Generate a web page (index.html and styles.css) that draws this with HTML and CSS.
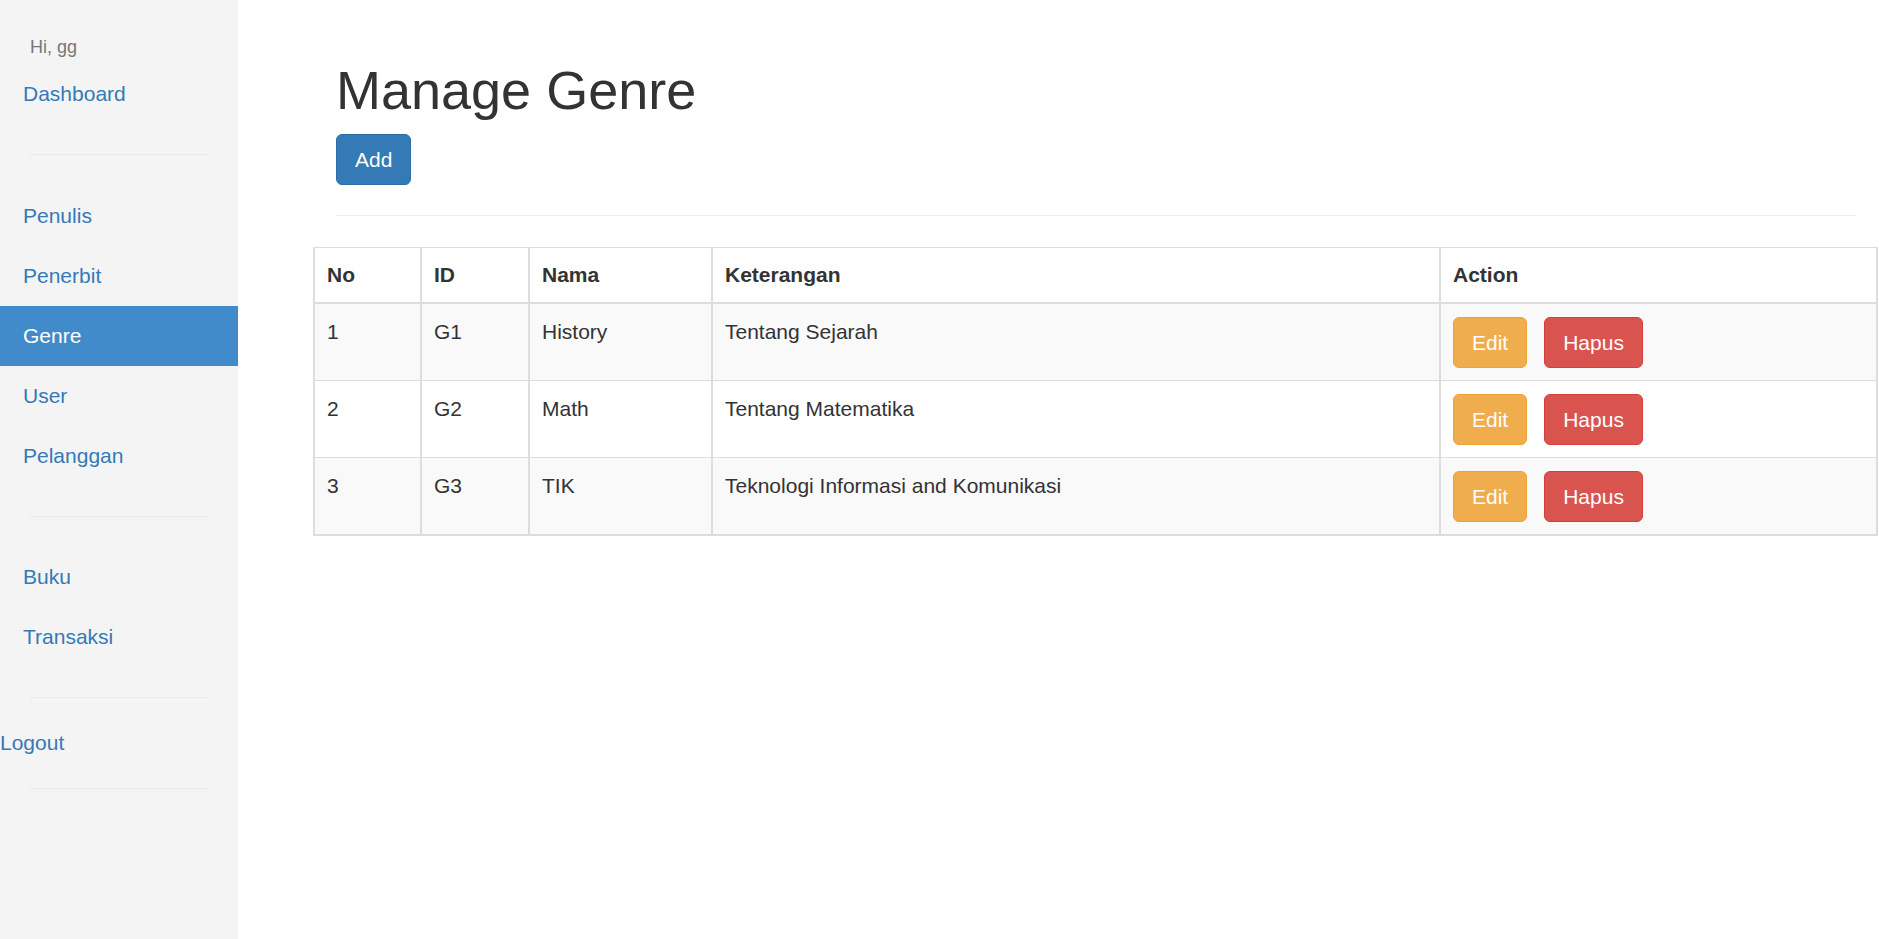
FILE: index.html
```html
<!DOCTYPE html>
<html lang="id">
<head>
<meta charset="utf-8">
<title>Manage Genre</title>
<link rel="stylesheet" href="styles.css">
</head>
<body>
<div class="layout">
  <aside class="sidebar">
    <div class="greeting">Hi, gg</div>
    <ul class="nav nav-first">
      <li><a class="nav-link" href="#">Dashboard</a></li>
    </ul>
    <hr class="sep sep-first">
    <ul class="nav">
      <li><a class="nav-link" href="#">Penulis</a></li>
      <li><a class="nav-link" href="#">Penerbit</a></li>
      <li><a class="nav-link active" href="#">Genre</a></li>
      <li><a class="nav-link" href="#">User</a></li>
      <li><a class="nav-link" href="#">Pelanggan</a></li>
    </ul>
    <hr class="sep">
    <ul class="nav">
      <li><a class="nav-link" href="#">Buku</a></li>
      <li><a class="nav-link" href="#">Transaksi</a></li>
    </ul>
    <hr class="sep">
    <a class="logout" href="#">Logout</a>
    <hr class="sep">
  </aside>
  <main class="main">
    <div class="page-head">
      <h1 class="title">Manage Genre</h1>
      <div class="toolbar"><a class="btn btn-primary" href="#">Add</a></div>
      <hr class="divider">
    </div>
    <table class="table">
      <colgroup>
        <col class="col-no">
        <col class="col-id">
        <col class="col-nama">
        <col class="col-ket">
        <col class="col-action">
      </colgroup>
      <thead>
        <tr><th>No</th><th>ID</th><th>Nama</th><th>Keterangan</th><th>Action</th></tr>
      </thead>
      <tbody>
        <tr class="odd">
          <td>1</td><td>G1</td><td>History</td><td>Tentang Sejarah</td>
          <td><div class="actions"><a class="btn btn-warning" href="#">Edit</a><a class="btn btn-danger" href="#">Hapus</a></div></td>
        </tr>
        <tr>
          <td>2</td><td>G2</td><td>Math</td><td>Tentang Matematika</td>
          <td><div class="actions"><a class="btn btn-warning" href="#">Edit</a><a class="btn btn-danger" href="#">Hapus</a></div></td>
        </tr>
        <tr class="odd">
          <td>3</td><td>G3</td><td>TIK</td><td>Teknologi Informasi and Komunikasi</td>
          <td><div class="actions"><a class="btn btn-warning" href="#">Edit</a><a class="btn btn-danger" href="#">Hapus</a></div></td>
        </tr>
      </tbody>
    </table>
  </main>
</div>
</body>
</html>
```

FILE: styles.css
```css
* { box-sizing: border-box; }

html, body {
  margin: 0;
  padding: 0;
  background: #fff;
}

body {
  font-family: "Liberation Sans", Arial, Helvetica, sans-serif;
  font-size: 21px;
  line-height: 30px;
  color: #333;
}

.layout {
  display: flex;
  min-height: 939px;
}

/* Sidebar */
.sidebar {
  width: 238px;
  flex: 0 0 238px;
  background: #f4f4f4;
}

.greeting {
  margin-top: 34px;
  padding-left: 30px;
  font-size: 18px;
  line-height: 26px;
  color: #777;
}

.nav {
  list-style: none;
  margin: 0;
  padding: 0;
}

.nav-first {
  margin-top: 4px;
}

.nav-link {
  display: block;
  padding: 15px 23px;
  line-height: 30px;
  color: #337ab7;
  text-decoration: none;
}

.nav-link.active {
  background: #428bca;
  color: #fff;
}

.sep {
  height: 0;
  border: 0;
  border-top: 1px solid #e9e9e9;
  margin: 30px 30px 30px;
}

.sep-first {
  margin-bottom: 31px;
}

.logout {
  display: block;
  line-height: 30px;
  color: #337ab7;
  text-decoration: none;
}

/* Main */
.main {
  flex: 1;
  min-width: 0;
  padding: 31px 1px 0 75px;
}

.page-head {
  padding: 0 22px 0 23px;
}

.title {
  margin: 30px 0 14px;
  font-size: 54px;
  line-height: 1.1;
  font-weight: 400;
  color: #333;
}

.toolbar {
  display: flex;
}

.btn {
  display: inline-block;
  padding: 9.5px 18px;
  font-size: 21px;
  line-height: 30px;
  border: 1px solid transparent;
  border-radius: 6px;
  color: #fff;
  text-decoration: none;
  white-space: nowrap;
}

.btn-primary {
  background: #337ab7;
  border-color: #2e6da4;
}

.btn-warning {
  background: #f0ad4e;
  border-color: #eea236;
}

.btn-danger {
  background: #d9534f;
  border-color: #d43f3a;
}

.divider {
  height: 0;
  border: 0;
  border-top: 1px solid #eee;
  margin: 30px 0 31px;
}

/* Table */
.table {
  width: 100%;
  border-collapse: collapse;
  table-layout: fixed;
  border: 2px solid #ddd;
  border-top-width: 1px;
}

.col-no { width: 107px; }
.col-id { width: 108px; }
.col-nama { width: 183px; }
.col-ket { width: 728px; }

.table th,
.table td {
  padding: 12px;
  text-align: left;
  vertical-align: top;
  line-height: 30px;
  border-top: 1px solid #ddd;
  border-bottom: 1px solid #ddd;
  border-left: 2px solid #ddd;
  border-right: 2px solid #ddd;
}

.table td {
  padding: 13px 12px 12px;
}

.table th {
  font-weight: 700;
  border-bottom: 2px solid #ddd;
}

.table tr.odd td {
  background: #f9f9f9;
}

.actions {
  display: flex;
  gap: 17px;
}
```
